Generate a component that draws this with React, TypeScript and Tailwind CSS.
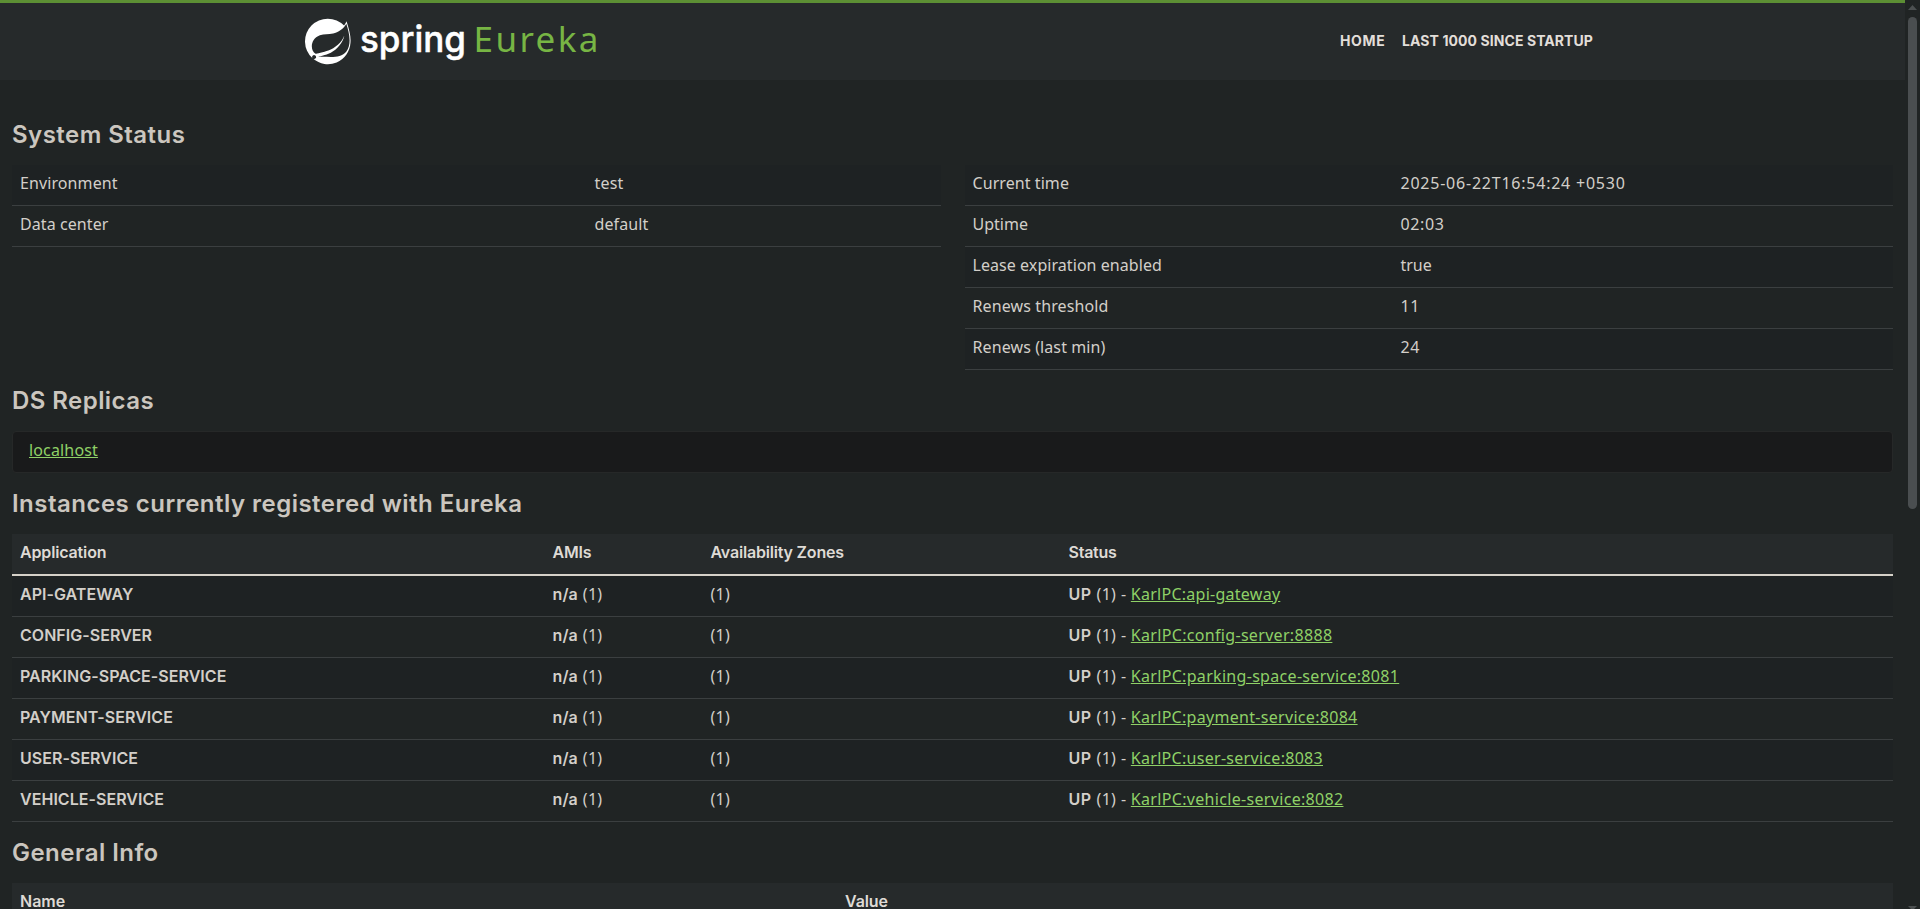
import type { ReactNode } from "react";

type Cell = { text: string; spacing: string };

const environment: [Cell, Cell][] = [
  [
    { text: "Environment", spacing: "tracking-[0.1px]" },
    { text: "test", spacing: "tracking-[0.19px]" },
  ],
  [
    { text: "Data center", spacing: "tracking-[0.08px]" },
    { text: "default", spacing: "tracking-[0.12px]" },
  ],
];

const runtime: [Cell, Cell][] = [
  [
    { text: "Current time", spacing: "tracking-[0.07px]" },
    { text: "2025-06-22T16:54:24 +0530", spacing: "tracking-[0.77px]" },
  ],
  [
    { text: "Uptime", spacing: "tracking-[0.01px]" },
    { text: "02:03", spacing: "tracking-[0.62px]" },
  ],
  [
    { text: "Lease expiration enabled", spacing: "tracking-[0.06px]" },
    { text: "true", spacing: "tracking-[-0.03px]" },
  ],
  [
    { text: "Renews threshold", spacing: "tracking-[0.12px]" },
    { text: "11", spacing: "tracking-[0.6px]" },
  ],
  [
    { text: "Renews (last min)", spacing: "tracking-[0.1px]" },
    { text: "24", spacing: "tracking-[0.6px]" },
  ],
];

const instances = [
  { app: "API-GATEWAY", link: "KarlPC:api-gateway", spacing: "tracking-[0.26px]" },
  { app: "CONFIG-SERVER", link: "KarlPC:config-server:8888", spacing: "tracking-[0.32px]" },
  { app: "PARKING-SPACE-SERVICE", link: "KarlPC:parking-space-service:8081", spacing: "tracking-[0.31px]" },
  { app: "PAYMENT-SERVICE", link: "KarlPC:payment-service:8084", spacing: "tracking-[0.3px]" },
  { app: "USER-SERVICE", link: "KarlPC:user-service:8083", spacing: "tracking-[0.29px]" },
  { app: "VEHICLE-SERVICE", link: "KarlPC:vehicle-service:8082", spacing: "tracking-[0.32px]" },
];

function Logo() {
  return (
    <svg width="296" height="52" viewBox="0 0 296 52" aria-label="spring Eureka">
      <g transform="translate(1 2.6) scale(1.9)">
        <path
          fill="#ffffff"
          d="M21.8537 1.4158a10.4504 10.4504 0 0 1-1.284 2.2471A11.9666 11.9666 0 1 0 3.8518 20.7757l.4445.3951a11.9543 11.9543 0 0 0 19.6316-8.2971c.3457-3.0126-.568-6.8649-2.0742-11.458zM5.5805 20.8745a1.0174 1.0174 0 1 1-.1482-1.4323 1.0396 1.0396 0 0 1 .1482 1.4323zm16.1991-3.5806c-2.9385 3.9263-9.2601 2.5928-13.2852 2.7904 0 0-.7161.0494-1.4323.1481 0 0 .2717-.1234.6174-.2469 2.8398-.9877 4.1732-1.1853 5.9018-2.0743 3.2349-1.6545 6.4698-5.2844 7.1118-9.0379-1.2347 3.6053-4.9881 6.7167-8.3959 7.9761-2.3459.8643-6.5685 1.7039-6.5685 1.7039l-.1729-.0988c-2.8645-1.4076-2.9632-7.6304 2.2718-9.6306 2.2966-.889 4.4696-.395 6.9637-.9877 2.6422-.6174 5.7042-2.5929 6.939-5.1857 1.3828 4.1732 3.062 10.643.0493 14.6434z"
        />
      </g>
      <text
        x="56"
        y="35.5"
        fill="#ffffff"
        stroke="#ffffff"
        strokeWidth="0.5"
        strokeLinejoin="round"
        fontFamily="Inter, sans-serif"
        fontSize="37"
        fontWeight="500"
        textLength="106"
        lengthAdjust="spacingAndGlyphs"
      >
        spring
      </text>
      <text x="169.5" y="35.8" fill="#77b544" fontFamily="Noto Sans, sans-serif" fontSize="35" textLength="125" lengthAdjust="spacing">
        Eureka
      </text>
    </svg>
  );
}

function Heading({ children, className }: { children: ReactNode; className: string }) {
  return (
    <h1 className={`h-[26px] whitespace-nowrap font-[Inter,sans-serif] text-2xl leading-[26px] font-semibold text-[#cbc6bf] ${className}`}>
      {children}
    </h1>
  );
}

const row = "flex h-[41px] border-b border-[#3b3f40] px-2 pt-1.5 leading-6 whitespace-nowrap";
const strong = "font-[Inter,sans-serif] font-semibold";

function InfoTable({ rows, nameWidth, width }: { rows: [Cell, Cell][]; nameWidth: string; width: string }) {
  return (
    <div className={width}>
      {rows.map(([name, value], i) => (
        <div key={name.text} className={`${row} ${i % 2 === 0 ? "bg-[#1e2223]" : ""}`}>
          <div className={`${nameWidth} ${name.spacing}`}>{name.text}</div>
          <div className={value.spacing}>{value.text}</div>
        </div>
      ))}
    </div>
  );
}

function Scrollbar() {
  return (
    <div className="flex w-[15px] shrink-0 flex-col items-center bg-[#202424]">
      <svg className="mt-[5px] h-[5px] w-[9px] shrink-0" viewBox="0 0 9 5">
        <path d="M4.5 0 9 5H0z" fill="#4c5051" />
      </svg>
      <div className="mt-[7px] h-[492px] w-[9px] shrink-0 rounded-full bg-[#4a4e50]" />
      <svg className="mt-auto h-[3px] w-[9px] shrink-0" viewBox="0 0 9 3">
        <path d="M0 0H9L6 3H3z" fill="#4c5051" />
      </svg>
    </div>
  );
}

export default function App() {
  return (
    <div className="flex h-[909px] w-[1920px] overflow-hidden bg-[#202424] font-['Noto_Sans',sans-serif] text-base text-[#d3cfc9]">
      <div className="w-[1905px] shrink-0">
        <header className="flex h-20 justify-between border-t-[3px] border-[#5c8f34] bg-[#262a2b] pr-[312px] pl-[304px]">
          <div className="pt-[13px]">
            <Logo />
          </div>
          <nav className="flex pt-7 font-[Inter,sans-serif] text-sm leading-5 font-bold whitespace-nowrap text-[#e2ded9]">
            <a className="w-[62px] tracking-[0.65px]">HOME</a>
            <a className="w-[191px] tracking-[0.08px]">LAST 1000 SINCE STARTUP</a>
          </nav>
        </header>

        <main className="px-3">
          <Heading className="mt-[42px] tracking-[0.46px]">System Status</Heading>
          <div className="mt-[17px] flex justify-between">
            <InfoTable rows={environment} nameWidth="w-[574.5px]" width="w-[929px]" />
            <InfoTable rows={runtime} nameWidth="w-[428px]" width="w-[928.5px]" />
          </div>

          <Heading className="mt-[18px] tracking-[0.44px]">DS Replicas</Heading>
          <div className="mt-[17px] h-[42px] rounded border border-[#262828] bg-[#191a1b] pt-[6px] pl-4 leading-6">
            <a className="tracking-[0.15px] text-[#8fd167] underline">localhost</a>
          </div>

          <Heading className="mt-[18px] tracking-[0.48px]">Instances currently registered with Eureka</Heading>
          <div className="mt-[17px]">
            <div className={`flex h-[42px] border-b-2 border-[#d5d1c8] bg-[#262a2b] px-2 pt-1.5 leading-6 whitespace-nowrap text-[#dedad5] ${strong}`}>
              <div className="w-[532.5px] tracking-[-0.15px]">Application</div>
              <div className="w-[158px] tracking-[-0.2px]">AMIs</div>
              <div className="w-[358px] tracking-[-0.19px]">Availability Zones</div>
              <div className="tracking-[-0.25px]">Status</div>
            </div>
            {instances.map((instance, i) => (
              <div key={instance.app} className={`${row} ${i % 2 === 0 ? "bg-[#1e2223]" : ""}`}>
                <div className={`w-[532.5px] tracking-[0.04px] ${strong}`}>{instance.app}</div>
                <div className="flex w-[158px] gap-[5px]">
                  <b className={`${strong} tracking-[0.1px]`}>n/a</b>
                  <span className="tracking-[0.24px]">(1)</span>
                </div>
                <div className="w-[358px] tracking-[0.24px]">(1)</div>
                <div className="flex gap-[4.8px]">
                  <b className={`${strong} tracking-[0.6px]`}>UP</b>
                  <span className="tracking-[0.24px]">(1)</span>
                  <span>-</span>
                  <a className={`text-[#8fd167] underline ${instance.spacing}`}>{instance.link}</a>
                </div>
              </div>
            ))}
          </div>

          <Heading className="mt-[18px] tracking-[0.46px]">General Info</Heading>
          <div className={`mt-[17px] flex h-[42px] border-b-2 border-[#d5d1c8] bg-[#262a2b] px-2 pt-1.5 leading-6 text-[#dedad5] ${strong}`}>
            <div className="w-[825px] tracking-[0px]">Name</div>
            <div className="tracking-[-0.1px]">Value</div>
          </div>
        </main>
      </div>
      <Scrollbar />
    </div>
  );
}
